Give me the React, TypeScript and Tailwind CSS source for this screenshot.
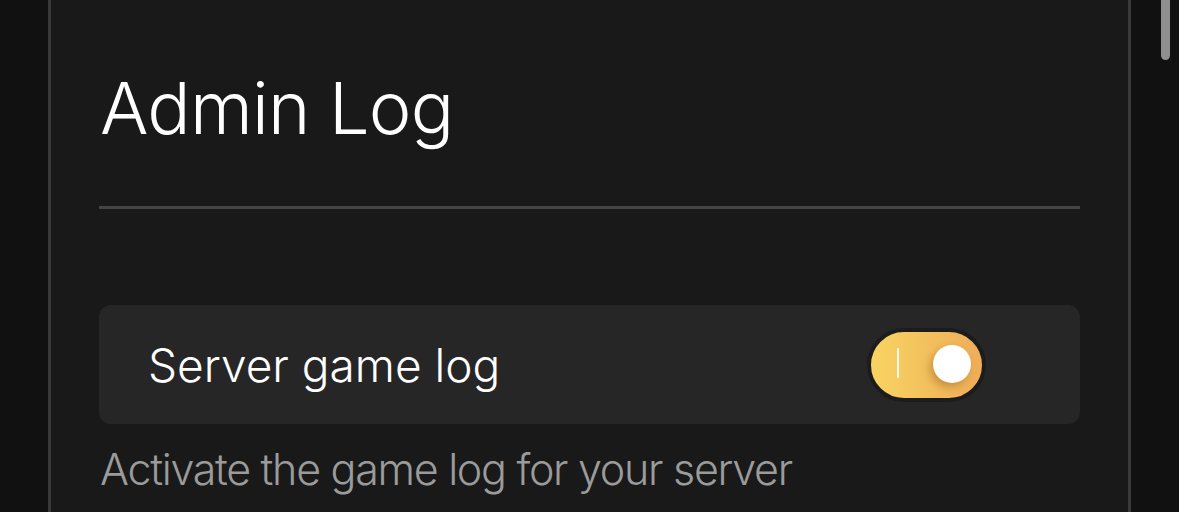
import React, { useState } from 'react';

// Settings panel: Admin Log section with a gold toggle
const GoldToggle = ({ on, onChange }: { on: boolean; onChange: (v: boolean) => void }) => (
  <button
    onClick={() => onChange(!on)}
    className="relative w-[119px] h-[74px] rounded-full border-[4px] border-[#1c1c1c] bg-gradient-to-r from-[#f8d462] to-[#eead58] flex items-center shrink-0"
  >
    <span className="absolute left-[26px] top-[16px] w-[2px] h-[30px] bg-white/90 rounded-full" />
    <span
      className={`absolute top-[13px] w-[38px] h-[38px] rounded-full bg-white shadow-[-3px_4px_8px_rgba(120,70,0,0.35)] transition-all ${
        on ? 'left-[62px]' : 'left-[8px]'
      }`}
    />
  </button>
);

export default function App() {
  const [gameLog, setGameLog] = useState(true);

  return (
    <div
      className="w-[1179px] h-[512px] overflow-hidden bg-[#111111] flex"
      style={{ fontFamily: 'Inter, "Noto Sans", sans-serif' }}
    >
      <div className="w-[48px] shrink-0" />

      <div className="flex-1 bg-[#191919] border-x-[3px] border-[#3a3a3a] pl-[48px] pr-[48px]">
        <h1 className="mt-[72px] ml-[1px] text-[72px] leading-[72px] font-light text-white tracking-[-0.8px]">
          Admin Log
        </h1>

        <div className="mt-[62px] h-[3px] bg-[#444444]" />

        <div className="mt-[96px] h-[119px] rounded-[12px] bg-[#262626] flex items-center justify-between pl-[49px] pr-[94px]">
          <span className="text-[46px] leading-none font-light text-white">Server game log</span>
          <GoldToggle on={gameLog} onChange={setGameLog} />
        </div>

        <p className="mt-[24px] ml-[1px] text-[43px] leading-none font-light text-[#9b9b9b] tracking-[-1.3px]">
          Activate the game log for your server
        </p>
      </div>

      <div className="w-[48px] shrink-0 relative">
        <div className="absolute left-[30px] top-0 w-[9px] h-[60px] rounded-b-full bg-[#8f8f8f]" />
      </div>
    </div>
  );
}
